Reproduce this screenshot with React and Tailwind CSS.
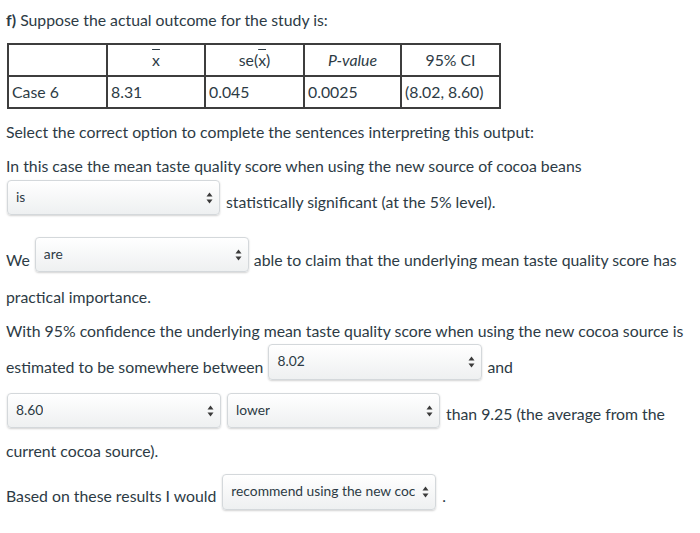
import React from "react";

function Arrows() {
  return (
    <svg width="7" height="12" viewBox="0 0 7 12" className="shrink-0">
      <path d="M3.5 0.5 L6.5 4.5 L0.5 4.5 Z" fill="#3a3a3a" />
      <path d="M3.5 11.5 L6.5 7.5 L0.5 7.5 Z" fill="#3a3a3a" />
    </svg>
  );
}

function Pick({ value, w = "w-[214px]", h = "h-[35px]" }) {
  return (
    <div
      className={`${w} ${h} shrink-0 flex items-center justify-between pl-[8px] pr-[6px] rounded-[4px] border border-[#d4d8db] bg-gradient-to-b from-[#ffffff] to-[#eef0f1] shadow-[0_1px_2px_rgba(0,0,0,0.18)] text-[13.8px] text-[#2d3b45] pb-[2px]`}
    >
      <span className="whitespace-nowrap overflow-hidden">{value}</span>
      <span className="pt-[2px]">
        <Arrows />
      </span>
    </div>
  );
}

const cell = "border-2 border-[#3d3d3d] h-[32px] px-[3px] text-[15.8px] font-normal";

export default function App() {
  return (
    <div
      className="w-[700px] h-[533px] bg-white px-[6px] pt-[9px] text-[15.8px] leading-[22px] text-[#2d3b45] overflow-hidden"
      style={{ fontFamily: "Lato, 'Liberation Sans', sans-serif" }}
    >
      <p>
        <span className="font-bold">f)</span> Suppose the actual outcome for the study is:
      </p>

      <table className="mt-[12px] ml-[1px] border-collapse table-fixed w-[493px]">
        <thead>
          <tr>
            <th className={`${cell} w-[99px]`}></th>
            <th className={`${cell} w-[98px] text-center`}>
              <span className="overline">x</span>
            </th>
            <th className={`${cell} w-[99px] text-center`}>
              se(<span className="overline">x</span>)
            </th>
            <th className={`${cell} w-[97px] text-center italic`}>P-value</th>
            <th className={`${cell} w-[99px] text-center`}>95% CI</th>
          </tr>
        </thead>
        <tbody>
          <tr>
            <td className={`${cell} h-[31px]`}>Case 6</td>
            <td className={`${cell} h-[31px]`}>8.31</td>
            <td className={`${cell} h-[31px]`}>0.045</td>
            <td className={`${cell} h-[31px]`}>0.0025</td>
            <td className={`${cell} h-[31px]`}>(8.02, 8.60)</td>
          </tr>
        </tbody>
      </table>

      <p className="mt-[12px]">Select the correct option to complete the sentences interpreting this output:</p>
      <p className="mt-[12px]">In this case the mean taste quality score when using the new source of cocoa beans</p>

      <div className="mt-[3px] ml-[1px] flex items-center gap-[6px]">
        <Pick value="is" w="w-[213px]" />
        <span className="mt-[8px]">statistically significant (at the 5% level).</span>
      </div>

      <div className="mt-[22px] flex items-center gap-[5px]">
        <span className="mt-[10px]">We</span>
        <Pick value="are" />
        <span className="mt-[10px] whitespace-nowrap">able to claim that the underlying mean taste quality score has</span>
      </div>

      <p className="mt-[14px]">practical importance.</p>
      <p className="mt-[12px] whitespace-nowrap">
        With 95% confidence the underlying mean taste quality score when using the new cocoa source is
      </p>

      <div className="mt-[2px] flex items-center gap-[5px]">
        <span className="mt-[10px]">estimated to be somewhere between</span>
        <Pick value="8.02" h="h-[36px]" />
        <span className="mt-[10px]">and</span>
      </div>

      <div className="mt-[13px] ml-[1px] flex items-center gap-[6px]">
        <Pick value="8.60" />
        <Pick value="lower" w="w-[213px]" />
        <span className="mt-[6px] whitespace-nowrap">than 9.25 (the average from the</span>
      </div>

      <p className="mt-[12px]">current cocoa source).</p>

      <div className="mt-[12px] flex items-center gap-[6px]">
        <span className="mt-[8px]">Based on these results I would</span>
        <Pick value="recommend using the new coc" h="h-[36px]" />
        <span className="mt-[8px]">.</span>
      </div>
    </div>
  );
}
